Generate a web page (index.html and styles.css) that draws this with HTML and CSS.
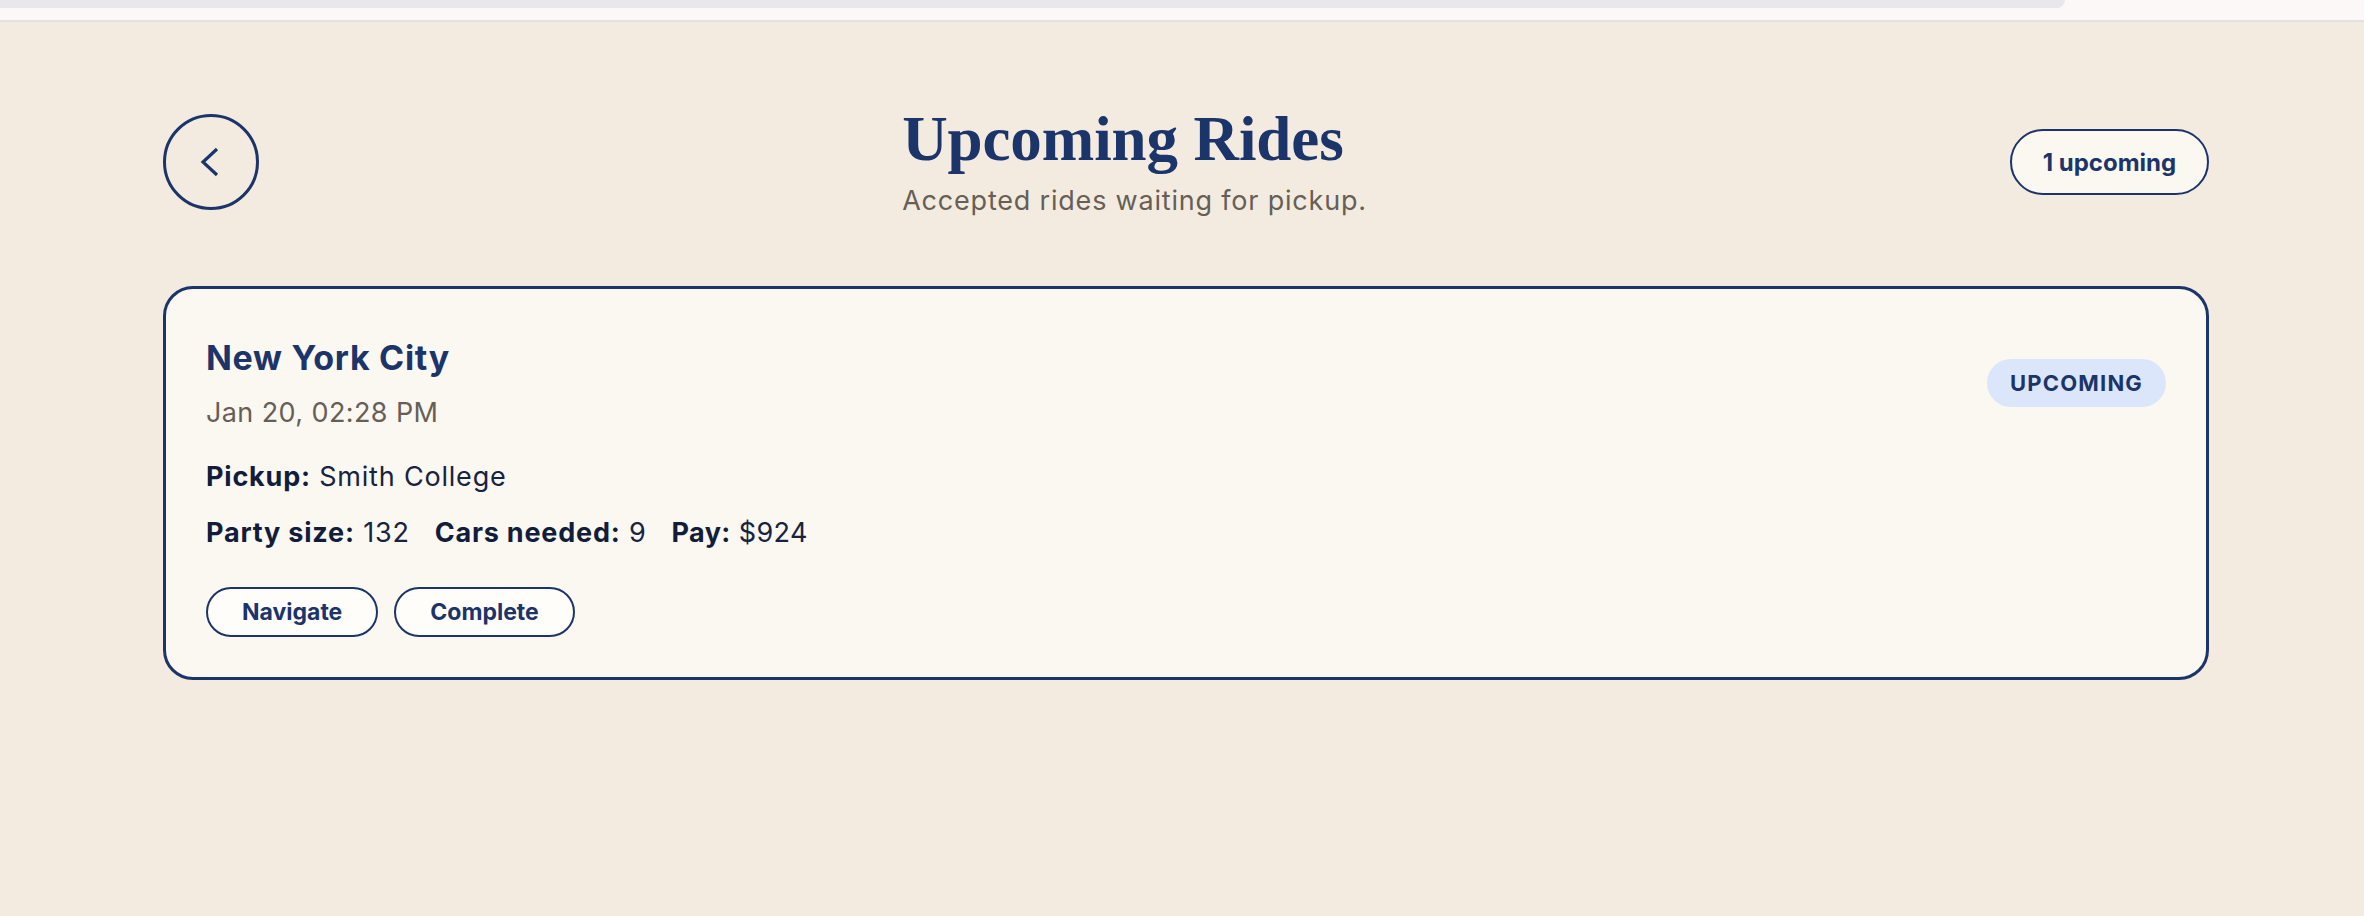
FILE: index.html
```html
<!DOCTYPE html>
<html lang="en">
<head>
<meta charset="utf-8">
<title>Upcoming Rides</title>
<link rel="stylesheet" href="styles.css">
</head>
<body>
<div class="topstrip"><div class="topstrip-tab"></div></div>
<main class="page">
  <header class="page-header">
    <button class="back-btn" aria-label="Back">
      <svg width="20" height="30" viewBox="0 0 20 30"><path d="M17 2 L3 15 L17 28" fill="none" stroke="#1b3469" stroke-width="3.2"/></svg>
    </button>
    <div class="title-block">
      <h1 class="title">Upcoming Rides</h1>
      <p class="subtitle">Accepted rides waiting for pickup.</p>
    </div>
    <div class="count-pill">1 upcoming</div>
  </header>

  <section class="ride-card">
    <div class="ride-head">
      <div>
        <h2 class="ride-city">New York City</h2>
        <div class="ride-date">Jan 20, 02:28 PM</div>
      </div>
      <span class="badge">UPCOMING</span>
    </div>
    <div class="ride-line pickup"><b>Pickup:</b> Smith College</div>
    <div class="ride-line stats">
      <span><b>Party size:</b> 132</span>
      <span><b>Cars needed:</b> 9</span>
      <span><b>Pay:</b> $924</span>
    </div>
    <div class="actions">
      <button class="action-btn">Navigate</button>
      <button class="action-btn">Complete</button>
    </div>
  </section>
</main>
</body>
</html>
```

FILE: styles.css
```css
* { box-sizing: border-box; }
html, body { margin: 0; padding: 0; }
body {
  background: #f3ebe0;
  font-family: Inter, "Noto Sans", "Liberation Sans", sans-serif;
  color: #1b3469;
  min-height: 916px;
}
.topstrip {
  height: 22px;
  background: #fcf8f8;
  border-bottom: 2px solid #e6e0dc;
}
.topstrip-tab {
  width: 2065px;
  height: 8px;
  background: #e8e7ec;
  border-bottom-right-radius: 8px;
}
.page {
  padding: 0 155px 0 163px;
}
.page-header {
  display: flex;
  justify-content: space-between;
  align-items: center;
  margin-top: 88px;
  height: 104px;
}
.back-btn {
  width: 96px;
  height: 96px;
  border-radius: 50%;
  border: 3px solid #1b3469;
  background: transparent;
  display: flex;
  align-items: center;
  justify-content: center;
  padding: 0 2px 0 0;
}
.back-btn svg { display: block; }
.title-block { white-space: nowrap; }
.title {
  margin: -2px 0 0;
  font-family: "Liberation Serif", "DejaVu Serif", serif;
  font-weight: 700;
  font-size: 63px;
  line-height: 66px;
  color: #1b3469;
  letter-spacing: -0.1px;
}
.subtitle {
  margin: 13px 0 0;
  font-size: 27px;
  line-height: 32px;
  color: #675f56;
  letter-spacing: 0.8px;
}
.count-pill {
  width: 199px;
  height: 66px;
  border: 2px solid #1b3469;
  border-radius: 33px;
  background: #fbf7f1;
  display: flex;
  align-items: center;
  justify-content: center;
  font-weight: 700;
  font-size: 24px;
  color: #1b3469;
}
.ride-card {
  margin-top: 72px;
  border: 3px solid #1b3469;
  border-radius: 30px;
  background: #fbf7f1;
  padding: 49px 40px 40px;
}
.ride-head {
  display: flex;
  justify-content: space-between;
  align-items: center;
}
.ride-city {
  margin: 0;
  font-size: 34px;
  line-height: 40px;
  font-weight: 700;
  color: #1b3469;
  letter-spacing: 0.7px;
}
.ride-date {
  margin-top: 17px;
  font-size: 27px;
  line-height: 36px;
  color: #675f56;
  letter-spacing: 0.4px;
}
.badge {
  width: 179px;
  height: 48px;
  border-radius: 24px;
  background: #dce6fa;
  display: flex;
  align-items: center;
  justify-content: center;
  font-weight: 700;
  font-size: 22px;
  letter-spacing: 1.2px;
  color: #1b3469;
  margin-top: -4px;
}
.ride-line {
  font-size: 27px;
  line-height: 36px;
  color: #172341;
  letter-spacing: 0.8px;
}
.ride-line b { font-weight: 700; color: #111d3a; }
.pickup { margin-top: 28px; }
.stats {
  margin-top: 20px;
  display: flex;
  gap: 25px;
}
.stats span:last-child { letter-spacing: 0.4px; }
.actions {
  margin-top: 36px;
  display: flex;
  gap: 16px;
}
.action-btn {
  height: 50px;
  padding: 9px 34px;
  border: 2px solid #1b3469;
  border-radius: 25px;
  background: #fffdfa;
  font-family: Inter, "Noto Sans", "Liberation Sans", sans-serif;
  font-weight: 700;
  font-size: 23px;
  line-height: 28px;
  color: #1b3469;
}
```
